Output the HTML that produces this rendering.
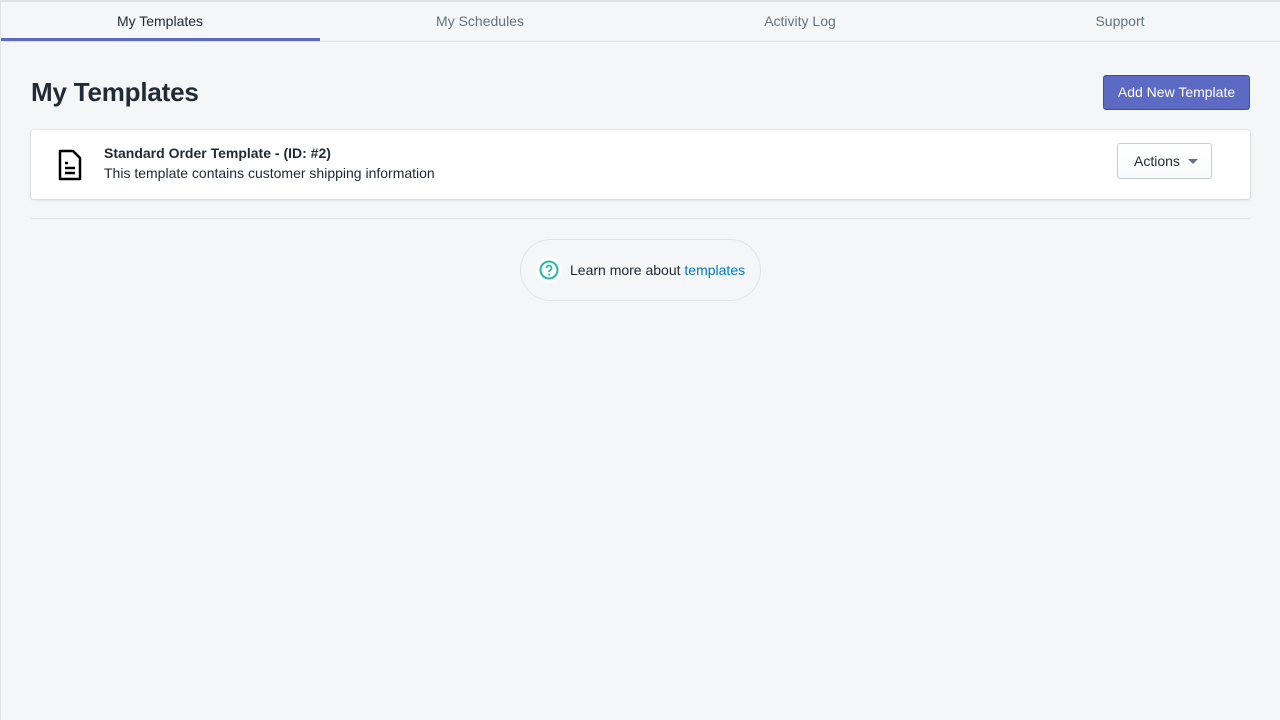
<!DOCTYPE html>
<html><head><style>
*{box-sizing:border-box;margin:0;padding:0}
body{width:1280px;height:720px;background:#f4f6f8;font-family:"Liberation Sans",sans-serif;color:#212b36;position:relative;overflow:hidden}
.lb{position:absolute;left:0;top:0;width:1px;height:720px;background:#dfe3e8}
.top{position:absolute;left:0;top:0;width:1280px;height:2px;background:#dfe3e8}
.tabs{position:absolute;left:0;top:2px;width:1280px;height:40px;border-bottom:1px solid #dfe3e8;display:flex}
.tab{flex:1;text-align:center;font-size:14px;line-height:38px;color:#637381}
.tab.a{color:#212b36;border-bottom:3px solid #5c6ac4}
h1{position:absolute;left:31px;top:77px;font-size:26px;font-weight:bold;letter-spacing:-0.2px}
.btn{position:absolute;left:1103px;top:75px;width:147px;height:35px;background:#5c6ac4;border:1px solid #3f4eae;border-radius:3px;color:#fff;font-size:14px;line-height:33px;text-align:center}
.card{position:absolute;left:31px;top:130px;width:1219px;height:69px;background:#fff;border-radius:3px;box-shadow:0 0 0 1px rgba(63,63,68,.06),0 1px 3px rgba(63,63,68,.15)}
.t1{position:absolute;left:73px;top:15px;font-size:14px;font-weight:bold}
.t2{position:absolute;left:73px;top:35px;font-size:14px}
.act{position:absolute;left:1086px;top:13px;width:95px;height:36px;border:1px solid #c4cdd5;border-radius:3px;background:linear-gradient(#fff,#f9fafb);font-size:14px;line-height:34px;padding-left:16px}
.act:after{content:"";position:absolute;right:13px;top:15px;border:5px solid transparent;border-top:5px solid #637381}
.hr{position:absolute;left:31px;top:218px;width:1219px;height:1px;background:#dfe3e8}
.pill{position:absolute;left:520px;top:239px;width:241px;height:62px;border:1px solid #dfe3e8;border-radius:31px;font-size:14px;line-height:60px;padding-left:49px}
.pill a{color:#007ace;text-decoration:none}
.ic{position:absolute;left:15px;top:17px;width:26px;height:26px;border-radius:50%;background:#fff;line-height:0}
.ic svg{display:block}
</style></head><body>
<div class="top"></div>
<div class="tabs"><div class="tab a">My Templates</div><div class="tab">My Schedules</div><div class="tab">Activity Log</div><div class="tab">Support</div></div>
<div class="lb"></div>
<h1>My Templates</h1>
<div class="btn">Add New Template</div>
<div class="card">
<svg style="position:absolute;left:27px;top:19px" width="24" height="32" viewBox="0 0 24 32"><path d="M2 2h13l7 7v21H2z" fill="none" stroke="#000" stroke-width="2.5" stroke-linejoin="round"/><path d="M7 14h3M7 19h10M7 24h10" stroke="#000" stroke-width="2.5"/></svg>
<div class="t1">Standard Order Template - (ID: #2)</div>
<div class="t2">This template contains customer shipping information</div>
<div class="act">Actions</div>
</div>
<div class="hr"></div>
<div class="pill"><div class="ic"><svg width="26" height="26" viewBox="0 0 26 26"><circle cx="13" cy="13" r="8.5" fill="none" stroke="#2bb5b0" stroke-width="2"/><path d="M10.5 11a2.5 2.5 0 1 1 3.3 2.4c-.6.3-.8.7-.8 1.3v.5" fill="none" stroke="#2bb5b0" stroke-width="1.8"/><circle cx="13" cy="17.6" r="1" fill="#2bb5b0"/></svg></div>Learn more about <a>templates</a></div>
</body></html>
